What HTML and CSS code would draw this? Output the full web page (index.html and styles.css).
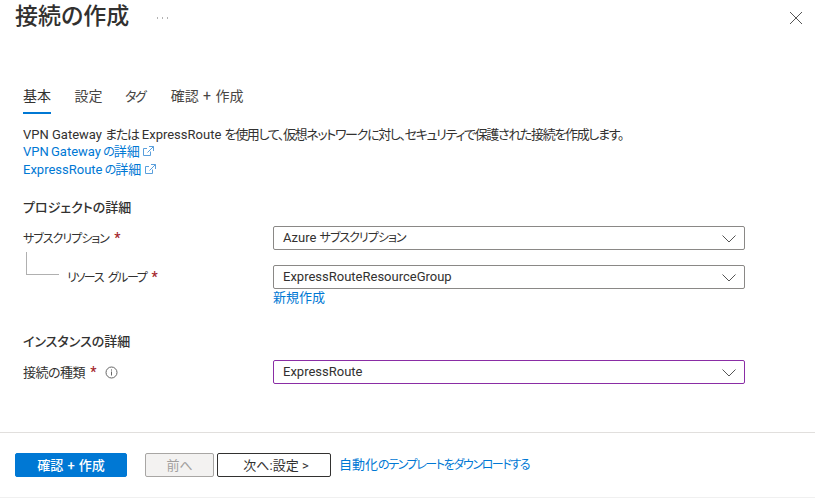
FILE: index.html
```html
<!DOCTYPE html>
<html lang="ja">
<head>
    <meta charset="UTF-8">
    <title>接続の作成</title>
    <link rel="stylesheet" href="styles.css">
</head>
<body>
    <div class="blade">
        <div class="blade-header">
            <h1>接続の作成</h1>
            <svg class="more" width="12" height="3" viewBox="0 0 12 3"><path d="M1 1h1M6 1h1M11 1h1" stroke="#666" fill="none"/></svg>
            <svg class="close" width="14" height="14" viewBox="0 0 14 14"><path d="M1 1 13 13M13 1 1 13" stroke="#555" fill="none"/></svg>
        </div>

        <div class="tabs">
            <div class="tab active">基本</div>
            <div class="tab">設定</div>
            <div class="tab"><span class="kana">タグ</span></div>
            <div class="tab wide">確認 + 作成</div>
        </div>

        <div class="intro">
            <p>VPN Gateway <span class="tight">または</span> ExpressRoute <span class="tight">を使用して、仮想ネットワークに対し、セキュリティで保護された接続を作成します。</span></p>
            <a class="link">VPN Gateway <span class="kana">の</span>詳細 <svg class="ext" width="11" height="10" viewBox="0 0 11 10"><path d="M7.5 5.5v4h-7v-7H4M6 .5h4.5V5M10.5 .5 4.5 6.5" stroke="#5a9fdc" fill="none"/></svg></a>
            <a class="link">ExpressRoute <span class="kana">の</span>詳細 <svg class="ext" width="11" height="10" viewBox="0 0 11 10"><path d="M7.5 5.5v4h-7v-7H4M6 .5h4.5V5M10.5 .5 4.5 6.5" stroke="#5a9fdc" fill="none"/></svg></a>
        </div>

        <h2 class="project-title">プロジェクトの詳細</h2>
        <div class="form-row">
            <label><span class="kana">サブスクリプション</span> <span class="req">*</span></label>
            <div class="select">Azure <span class="kana">サブスクリプション</span><svg class="chevron" width="14" height="8" viewBox="0 0 14 8"><path d="M.5 .5 7 7 13.5 .5" stroke="#555" fill="none"/></svg></div>
        </div>
        <div class="form-row child-row">
            <span class="tree-line"></span>
            <label class="child-label"><span class="kana">リソース グループ</span> <span class="req">*</span></label>
            <div class="select">ExpressRouteResourceGroup<svg class="chevron" width="14" height="8" viewBox="0 0 14 8"><path d="M.5 .5 7 7 13.5 .5" stroke="#555" fill="none"/></svg></div>
        </div>
        <div class="create-new"><a class="link">新規作成</a></div>

        <h2 class="instance-title">インスタンスの詳細</h2>
        <div class="form-row">
            <label><span class="tight-sm">接続の種類</span> <span class="req">*</span>
                <svg class="info" width="13" height="13" viewBox="0 0 13 13"><circle cx="6.5" cy="6.5" r="5.5" stroke="#666" fill="none"/><path d="M6.5 5.5v4M6.5 3.4v1.2" stroke="#666" fill="none"/></svg>
            </label>
            <div class="select focused">ExpressRoute<svg class="chevron" width="14" height="8" viewBox="0 0 14 8"><path d="M.5 .5 7 7 13.5 .5" stroke="#555" fill="none"/></svg></div>
        </div>

        <div class="footer">
            <button class="btn primary">確認 + 作成</button>
            <button class="btn disabled">前へ</button>
            <button class="btn outline">次へ:設定 &gt;</button>
            <a class="link">自動化<span class="kana">のテンプレートをダウンロードする</span></a>
        </div>
    </div>
</body>
</html>
```

FILE: styles.css
```css
body {
    margin: 0;
    background-color: #fff;
    color: #323130;
    font-family: Roboto, "Noto Sans CJK JP", sans-serif;
    font-size: 13px;
    font-feature-settings: "palt";
}
.kana {
    font-size: 12px;
    letter-spacing: -1px;
}
.tight {
    letter-spacing: -1.33px;
}
.tight-sm {
    letter-spacing: -.5px;
}
.blade {
    height: 498px;
    box-sizing: border-box;
    border-bottom: 1px solid #f0f0f0;
    overflow: hidden;
}
.blade-header {
    display: flex;
    align-items: center;
    height: 34px;
    padding: 0 12px 0 15px;
}
h1 {
    margin: 0;
    font-size: 23px;
    font-weight: 500;
    line-height: 34px;
}
.more {
    margin: 3px 0 0 27px;
}
.close {
    margin: 2px 0 0 auto;
}
.tabs {
    display: flex;
    gap: 23.5px;
    margin: 48px 0 0 23px;
    height: 32px;
}
.tab {
    font-size: 14px;
    line-height: 28px;
    color: #484644;
}
.tab.wide {
    margin-left: 2px;
    word-spacing: 1px;
}
.tab .kana {
    margin-left: -1px;
    font-size: 13px;
    letter-spacing: -1.5px;
}
.tab.active {
    color: #323130;
    border-bottom: 2px solid #0078d4;
    box-sizing: border-box;
    height: 32px;
}
.intro {
    margin: 12px 0 0 23px;
    line-height: 17px;
}
.intro p {
    margin: 0;
}
.intro .link {
    word-spacing: -1px;
}
.link {
    display: block;
    color: #0078d4;
}
.ext {
    margin-left: 1px;
}
h2 {
    margin: 0 0 0 23px;
    font-size: 13px;
    font-weight: 500;
    line-height: 17px;
}
.project-title {
    margin-top: 20px;
}
.instance-title {
    margin-top: 27px;
}
.form-row {
    display: grid;
    grid-template-columns: 250px 472px;
    align-items: center;
    margin: 10px 0 0 23px;
}
.form-row label {
    padding-bottom: 2px;
}
.child-row {
    position: relative;
    margin-top: 15px;
}
.tree-line {
    position: absolute;
    left: 3px;
    top: -13px;
    width: 32px;
    height: 22px;
    border-left: 1px solid #b0b0b0;
    border-bottom: 1px solid #b0b0b0;
}
.form-row .child-label {
    padding-left: 44px;
}
.child-label .kana {
    letter-spacing: -1.4px;
    word-spacing: 3px;
}
.req {
    margin-left: 2px;
    color: #a4262c;
    font-size: 14px;
    font-weight: 500;
}
.info {
    margin-left: 5px;
    vertical-align: -2px;
}
.select {
    position: relative;
    box-sizing: border-box;
    height: 24px;
    padding: 0 9px;
    border: 1px solid #8a8886;
    border-radius: 2px;
    line-height: 22px;
}
.select.focused {
    border-color: #8a2da5;
}
.chevron {
    position: absolute;
    right: 8px;
    top: 8px;
}
.create-new {
    margin: -2px 0 0 273px;
}
.footer {
    display: flex;
    align-items: center;
    height: 64px;
    margin-top: 48px;
    padding-left: 15px;
    border-top: 1px solid #e1dfdd;
}
.btn {
    box-sizing: border-box;
    height: 24px;
    padding: 0 0 2px;
    border-radius: 2px;
    font-family: inherit;
    font-feature-settings: inherit;
    font-size: 13px;
}
.primary {
    width: 112px;
    border: 1px solid #0078d4;
    background-color: #0078d4;
    color: #fff;
    font-weight: 500;
    word-spacing: 1px;
}
.disabled {
    width: 69px;
    margin-left: 18px;
    border: 1px solid #a8a6a4;
    background-color: #f3f2f1;
    color: #a19f9d;
}
.outline {
    width: 114px;
    margin-left: 3px;
    padding-left: 4px;
    border: 1px solid #323130;
    background-color: #fff;
    color: #323130;
}
.footer .link {
    margin: -3px 0 0 8px;
}
.footer .kana {
    letter-spacing: -1.4px;
}
```
